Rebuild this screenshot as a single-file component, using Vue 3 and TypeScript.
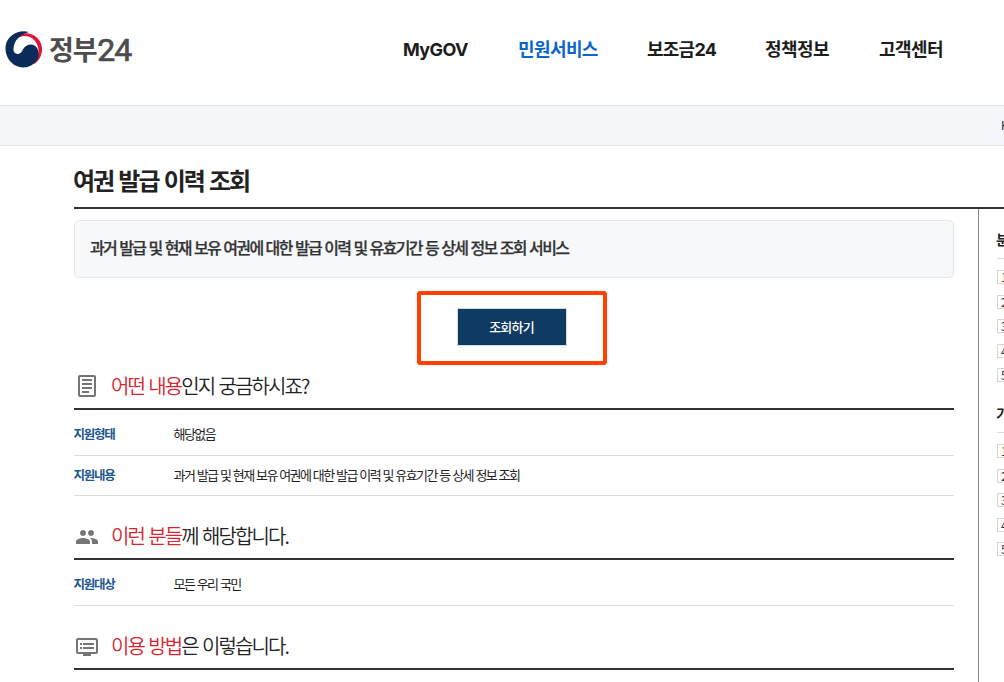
<script setup lang="ts">
interface Row { label: string; value: string }
interface Section { icon: 'doc' | 'people' | 'screen'; accent: string; rest: string; rows: Row[] }

const nav: { text: string; active?: boolean; cls: string }[] = [
  { text: 'MyGOV', cls: 'n1' },
  { text: '민원서비스', active: true, cls: 'n2' },
  { text: '보조금24', cls: 'n3' },
  { text: '정책정보', cls: 'n4' },
  { text: '고객센터', cls: 'n5' },
]

const sections: Section[] = [
  {
    icon: 'doc', accent: '어떤 내용', rest: '인지 궁금하시죠?',
    rows: [
      { label: '지원형태', value: '해당없음' },
      { label: '지원내용', value: '과거 발급 및 현재 보유 여권에 대한 발급 이력 및 유효기간 등 상세 정보 조회' },
    ],
  },
  { icon: 'people', accent: '이런 분들', rest: '께 해당합니다.', rows: [{ label: '지원대상', value: '모든 우리 국민' }] },
  { icon: 'screen', accent: '이용 방법', rest: '은 이렇습니다.', rows: [] },
]

const paths: Record<Section['icon'], string> = {
  doc: 'M5 1h14a2 2 0 0 1 2 2v18a2 2 0 0 1-2 2H5a2 2 0 0 1-2-2V3a2 2 0 0 1 2-2zm0 2v18h14V3zM7 5h10v2H7zm0 4h10v2H7zm0 4h10v2H7zm0 4h7v2H7z',
  people: 'M16 11c1.66 0 2.99-1.34 2.99-3S17.66 5 16 5c-1.66 0-3 1.34-3 3s1.34 3 3 3zm-8 0c1.66 0 2.99-1.34 2.99-3S9.66 5 8 5C6.34 5 5 6.34 5 8s1.34 3 3 3zm0 2c-2.33 0-7 1.17-7 3.5V19h14v-2.5c0-2.33-4.67-3.5-7-3.5zm8 0c-.29 0-.62.02-.97.05 1.16.84 1.97 1.97 1.97 3.45V19h6v-2.5c0-2.33-4.67-3.5-7-3.5z',
  screen: 'M21 3H3c-1.1 0-2 .9-2 2v12c0 1.1.9 2 2 2h5v2h8v-2h5c1.1 0 1.99-.9 1.99-2L23 5c0-1.1-.9-2-2-2zm0 14H3V5h18v12zm-2-9H8v2h11V8zm0 4H8v2h11v-2zM7 8H5v2h2V8zm0 4H5v2h2v-2z',
}

const rankings: string[] = ['분야별', '기관별']
</script>

<template>
  <div class="page">
    <header class="top">
      <div class="logo">
        <svg class="mark" viewBox="0 0 38 38" width="38" height="38">
          <path d="M8 12C12 4 20 1.500 27 4.500 34 7.500 37.500 14 37 20.500 36.500 27 33 32 28 34.500 33 29 35 22 32.500 15.500 30 8.500 24 5.500 18.500 6 14 6.500 11 9 8 12z" fill="#e4123a" />
          <path d="M24 2C14-1.200 4 5 1.300 13-1.500 22 3 32 11 35.800 19 39.500 28 36.500 32 30 35 25 34 18 29.500 15.500 25 13 20.500 15.500 18.500 18.500 17 21.500 15.500 24 12.500 24 9.500 24 8 21.500 8.500 18.500 9 11.500 14 4.500 24 2z" fill="#0b2c59" />
        </svg>
        <span class="name">정부</span><span class="num">24</span>
      </div>
      <nav class="nav">
        <a v-for="n in nav" :key="n.text" :class="[n.cls, { active: n.active }]">{{ n.text }}</a>
      </nav>
    </header>
    <div class="crumbs"><span>HOME</span></div>

    <h1 class="title">여권 발급 이력 조회</h1>
    <div class="body">
      <main class="main">
        <p class="desc">과거 발급 및 현재 보유 여권에 대한 발급 이력 및 유효기간 등 상세 정보 조회 서비스</p>
        <div class="highlight"><button class="btn">조회하기</button></div>
        <section v-for="s in sections" :key="s.icon" class="section">
          <h2>
            <svg :class="s.icon" viewBox="0 0 24 24" width="24" height="24"><path :d="paths[s.icon]" fill="#757575" fill-rule="evenodd" /></svg>
            <span><em>{{ s.accent }}</em>{{ s.rest }}</span>
          </h2>
          <dl v-for="r in s.rows" :key="r.label">
            <dt>{{ r.label }}</dt>
            <dd>{{ r.value }}</dd>
          </dl>
        </section>
      </main>
      <aside class="side">
        <div v-for="r in rankings" :key="r" class="rank">
          <h3>{{ r }}</h3>
          <ol><li v-for="i in 5" :key="i"><b>{{ i }}</b></li></ol>
        </div>
      </aside>
    </div>
  </div>
</template>

<style>
body { margin: 0; background: #fff; }
</style>

<style scoped>
* { box-sizing: border-box; margin: 0; padding: 0; }
.page { width: 1004px; height: 682px; overflow: hidden; background: #fff; color: #222; font-family: "Noto Sans CJK KR", sans-serif; white-space: nowrap; }
.top { display: flex; align-items: center; height: 105px; padding: 0 0 6px 5px; }
.logo { display: flex; align-items: center; width: 398px; color: #4d4d4d; }
.mark { margin: -1px 6px 0 0; }
.name { font-size: 27px; line-height: 36px; font-weight: 700; letter-spacing: -1.2px; margin-top: -2px; }
.num { font: 400 32px/36px Roboto, sans-serif; letter-spacing: -0.9px; margin-left: 1px; -webkit-text-stroke: 0.7px #4d4d4d; }
.nav { display: flex; font: 700 18px/28px Inter, "Noto Sans CJK KR", sans-serif; letter-spacing: -0.6px; color: #1d1d1d; }
.nav a { display: block; }
.n1 { width: 115px; letter-spacing: -0.6px; }
.n2 { width: 129px; }
.n3 { width: 118px; letter-spacing: -0.75px; }
.n4 { width: 114px; }
.nav .active { color: #0b66cc; }
.crumbs { height: 41px; background: #f5f7fb; border-top: 1px solid #dfe2e8; border-bottom: 1px solid #e3e6ea; padding-left: 1001px; font-size: 12px; line-height: 38px; overflow: hidden; }
.title { height: 63px; margin-left: 74px; border-bottom: 2px solid #333; font-size: 24px; line-height: 68px; font-weight: 700; letter-spacing: -2.05px; word-spacing: 1.9px; text-indent: -1px; }
.body { display: flex; }
.main { width: 978px; padding: 11px 24px 0 74px; }
.desc { height: 58px; border: 1px solid #e3e6ea; border-radius: 5px; background: #f6f8fa; padding-left: 15px; font-size: 16px; line-height: 53px; font-weight: 500; letter-spacing: -1.64px; word-spacing: 1.15px; color: #333; -webkit-text-stroke: 0.25px #333; }
.highlight { width: 190px; height: 74px; margin: 13px 0 0 343px; border: 4px solid #ff4000; border-radius: 3px; display: flex; align-items: center; justify-content: center; }
.btn { width: 110px; height: 38px; border: 1px solid #d3dde5; background: #0f3b63; color: #fff; font: 500 13px/33px "Noto Sans CJK KR", sans-serif; letter-spacing: -0.8px; margin: -2px 0 0 0; padding: 0 1px 2px 0; }
.section h2 { display: flex; align-items: center; height: 45px; border-bottom: 2px solid #333; font-size: 20px; line-height: 40px; font-weight: 350; letter-spacing: -1.9px; word-spacing: 1.7px; padding-left: 1px; }
.section h2 svg { margin: -1px 12px 0 0; }
.section h2 .people, .section h2 .screen { margin-top: 1px; }
.section h2 span { margin-top: -2px; }
.section em { font-style: normal; color: #d9232e; }
.section { margin-bottom: 19px; }
dl { display: flex; height: 40px; border-bottom: 1px solid #ddd; font-size: 13px; line-height: 38px; letter-spacing: -1.57px; word-spacing: 1.1px; }
h2 + dl { height: 46px; line-height: 48px; }
dt { width: 100px; color: #1d5691; font-size: 12.5px; font-weight: 700; letter-spacing: -1.25px; text-indent: -0.5px; }
dd { text-indent: -0.5px; }
.side { width: 26px; height: 480px; border-left: 1px solid #888; padding: 13px 0 0 18px; overflow: hidden; }
.rank h3 { height: 37px; border-bottom: 1px solid #ddd; font-size: 14px; line-height: 35px; font-weight: 700; text-indent: -1px; }
.rank ol { list-style: none; padding-top: 11px; height: 137px; }
.rank li { height: 24.5px; }
.rank b { display: block; width: 14px; height: 14px; border: 1px solid #d5d5d5; font: 400 12px/12px "Noto Sans CJK KR", sans-serif; padding-left: 3px; color: #333; }
</style>
